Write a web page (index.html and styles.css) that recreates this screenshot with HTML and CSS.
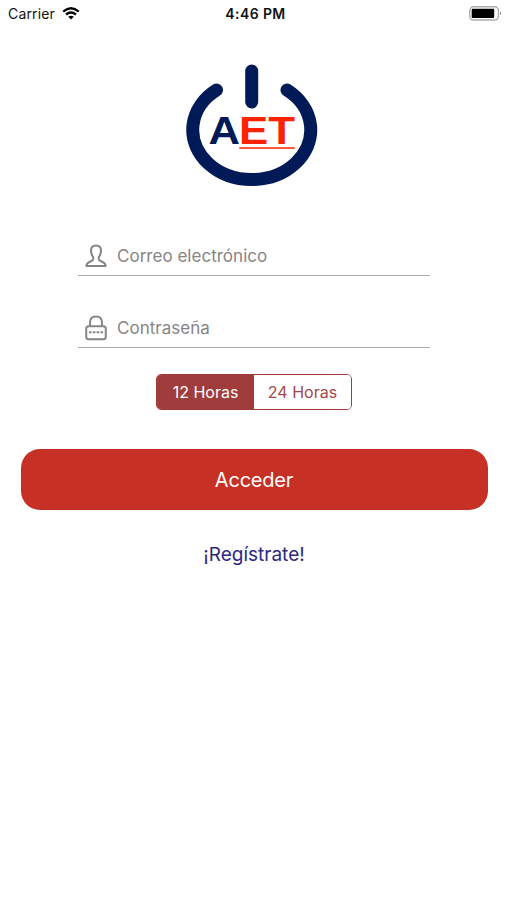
FILE: index.html
```html
<!DOCTYPE html>
<html lang="es">

<head>
    <meta charset="UTF-8">
    <meta name="viewport" content="width=device-width, initial-scale=1.0">
    <title>AET - Acceder</title>
    <link rel="stylesheet" href="styles.css">
</head>

<body>

    <!-- Barra de estado -->
    <header class="status-bar">
        <div class="carrier">
            <span class="carrier-name">Carrier</span>
            <svg class="wifi" width="18" height="13" viewBox="0 0 18 13" fill="none" stroke="#000" stroke-width="2.3">
                <path d="M1.2 4.6Q9 -2 16.8 4.6" />
                <path d="M4 7.5Q9 3.4 14 7.5" />
                <path d="M9 12.6L6.2 9.8Q9 7.6 11.8 9.8Z" fill="#000" stroke="none" />
            </svg>
        </div>
        <span class="clock">4:46 PM</span>
        <svg class="battery" width="33" height="15" viewBox="0 0 33 15">
            <rect x="0.8" y="0.8" width="28.6" height="13.2" rx="3.8" fill="#fff" stroke="#aaa" stroke-width="1.4" />
            <rect x="2.7" y="2.7" width="22.5" height="9.4" rx="1" fill="#000" />
            <path d="M31 5.2Q33 7.4 31 9.6Z" fill="#888" />
        </svg>
    </header>

    <main class="login">
        <!-- Logo -->
        <svg class="logo" width="132" height="123" viewBox="0 0 132 123">
            <g fill="none" stroke="#001a57" stroke-width="13" stroke-linecap="round">
                <path d="M30.5 26A59 49.7 0 1 0 101 26" />
                <path d="M65.7 7V38" />
            </g>
            <g class="logo-text">
                <text x="22.5" y="80" textLength="31.5" lengthAdjust="spacingAndGlyphs" fill="#001a57">A</text>
                <text x="53" y="80" textLength="56" lengthAdjust="spacingAndGlyphs" fill="#ff2200">ET</text>
            </g>
            <rect x="53.3" y="83.3" width="55.5" height="1.5" fill="#ff2200" />
        </svg>

        <form class="login-form">
            <label class="field">
                <svg width="22" height="24" viewBox="0 0 22 24" fill="none" stroke="#858585" stroke-width="2" stroke-linejoin="round">
                    <path d="M11 1.5C7.8 1.5 6 3.4 6 6.6C6 9.6 7 11.8 8.2 13.2V15.5C7.9 17.6 2 17 1.3 22H20.7C20 17 14.1 17.6 13.8 15.5V13.2C15 11.8 16 9.6 16 6.6C16 3.4 14.2 1.5 11 1.5Z" />
                </svg>
                <input type="email" placeholder="Correo electrónico">
            </label>

            <label class="field">
                <svg width="22" height="26" viewBox="0 0 22 26" fill="none" stroke="#858585" stroke-width="2">
                    <path d="M5 11V7.5C5 3.8 7.4 1.5 11 1.5S17 3.8 17 7.5V11" />
                    <rect x="1.2" y="11.2" width="19.6" height="13" rx="2.5" />
                    <path d="M4 17.3H18" stroke-dasharray="2.6 1.2" />
                </svg>
                <input type="password" placeholder="Contraseña">
            </label>

            <div class="segmented">
                <button type="button" class="segment active">12 Horas</button>
                <button type="button" class="segment">24 Horas</button>
            </div>

            <button type="button" class="btn-login">Acceder</button>
        </form>

        <a class="register" href="#">¡Regístrate!</a>
    </main>

</body>

</html>
```

FILE: styles.css
```css
* {
    box-sizing: border-box;
}

body {
    margin: 0;
    background: #fff;
    font-family: Inter, "Liberation Sans", sans-serif;
}

input,
button {
    font-family: inherit;
}

.status-bar {
    display: grid;
    grid-template-columns: 1fr auto 1fr;
    align-items: center;
    height: 27px;
    padding: 0 5px 0 8px;
    font-size: 14px;
    color: #111;
}

.carrier {
    display: flex;
    align-items: center;
    gap: 7px;
}

.carrier-name {
    letter-spacing: 0.15px;
}

.clock {
    padding-left: 1px;
    font-weight: 600;
    letter-spacing: 0.4px;
}

.battery {
    justify-self: end;
}

.login {
    display: flex;
    flex-direction: column;
    align-items: center;
    padding: 37px 19px 0 20px;
}

.logo {
    display: block;
    margin-right: 4px;
}

.logo-text {
    font-family: "Liberation Sans", Arial, sans-serif;
    font-size: 38px;
    font-weight: bold;
}

.login-form {
    display: flex;
    flex-direction: column;
    align-items: center;
    width: 100%;
    margin-top: 49px;
}

.field {
    display: flex;
    align-items: center;
    gap: 10px;
    width: 352px;
    height: 40px;
    margin-bottom: 32px;
    padding-left: 7px;
    border-bottom: 1px solid #aaa;
}

.field input {
    flex: 1;
    min-width: 0;
    padding: 0;
    border: 0;
    outline: 0;
    background: none;
    font-size: 17px;
    letter-spacing: 0.02px;
}

.field input::placeholder {
    color: #858585;
}

.segmented {
    display: flex;
    width: 196px;
    height: 36px;
    margin-top: -6px;
    overflow: hidden;
    border: 1px solid #a33d3d;
    border-radius: 5px;
}

.segment {
    flex: 1;
    padding: 0;
    border: 0;
    background: #fff;
    color: #a3484d;
    font-size: 16px;
}

.segment.active {
    background: #a03c3c;
    color: #fff;
}

.btn-login {
    width: 467px;
    height: 61px;
    margin-top: 39px;
    border: 0;
    border-radius: 19px;
    background: #c63025;
    color: #fff;
    font-size: 20px;
    letter-spacing: -0.2px;
}

.register {
    margin-top: 33px;
    color: #2b2a80;
    font-size: 19px;
    line-height: 24px;
    text-decoration: none;
}
```
